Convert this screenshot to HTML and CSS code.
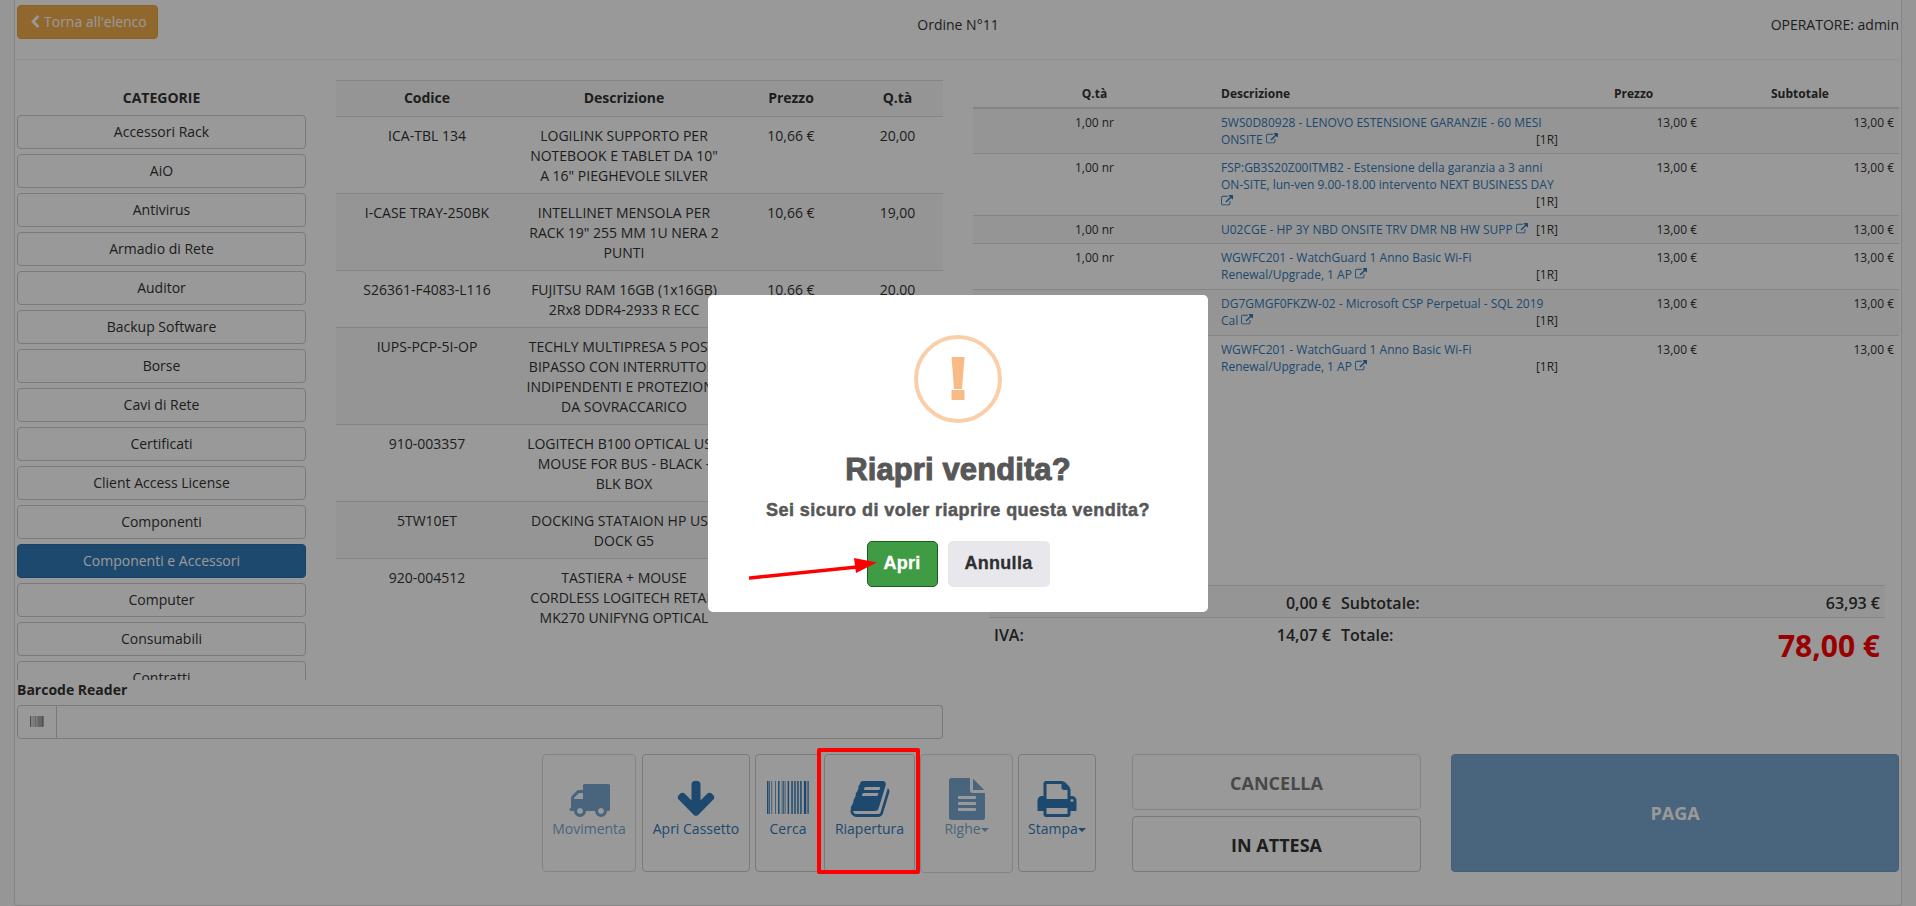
FILE: index.html
```html
<!DOCTYPE html>
<html lang="it">
<head>
  <meta charset="UTF-8" />
  <meta name="viewport" content="width=device-width, initial-scale=1.0" />
  <title>Ordine N°11</title>
  <link rel="stylesheet" href="styles.css">
</head>
<body>
  <svg class="icon-defs" xmlns="http://www.w3.org/2000/svg">
    <symbol id="i-chevron" viewBox="0 0 1792 1792"><path d="M1427 301l-531 531 531 531q19 19 19 45t-19 45l-166 166q-19 19-45 19t-45-19l-742-742q-19-19-19-45t19-45l742-742q19-19 45-19t45 19l166 166q19 19 19 45t-19 45z"/></symbol>
    <symbol id="i-link" viewBox="0 0 1792 1792"><path d="M1408 928v320q0 119-84.5 203.5t-203.5 84.5h-832q-119 0-203.5-84.5t-84.5-203.5v-832q0-119 84.5-203.5t203.5-84.5h704q14 0 23 9t9 23v64q0 14-9 23t-23 9h-704q-66 0-113 47t-47 113v832q0 66 47 113t113 47h832q66 0 113-47t47-113v-320q0-14 9-23t23-9h64q14 0 23 9t9 23zm384-864v512q0 26-19 45t-45 19-45-19l-176-176-652 652q-10 10-23 10t-23-10l-114-114q-10-10-10-23t10-23l652-652-176-176q-19-19-19-45t19-45 45-19h512q26 0 45 19t19 45z"/></symbol>
    <symbol id="i-barcode" viewBox="0 0 1792 1792"><path d="M63 1536h-63v-1408h63v1408zm63-1h-32v-1407h32v1407zm94 0h-31v-1407h31v1407zm157 0h-31v-1407h31v1407zm157 0h-62v-1407h62v1407zm126 0h-31v-1407h31v1407zm63 0h-31v-1407h31v1407zm63 0h-31v-1407h31v1407zm157 0h-63v-1407h63v1407zm157 0h-63v-1407h63v1407zm126 0h-63v-1407h63v1407zm126 0h-63v-1407h63v1407zm126 0h-63v-1407h63v1407zm189 0h-94v-1407h94v1407zm63 0h-32v-1407h32v1407zm94 1h-63v-1408h63v1408z"/></symbol>
    <symbol id="i-truck" viewBox="0 0 1792 1792"><path d="M640 1408q0-52-38-90t-90-38-90 38-38 90 38 90 90 38 90-38 38-90zm-384-512h384v-256h-158q-13 0-22 9l-195 195q-9 9-9 22v30zm1280 512q0-52-38-90t-90-38-90 38-38 90 38 90 90 38 90-38 38-90zm256-1088v1024q0 15-4 26.5t-13.5 18.5-16.5 11.5-23.5 6-22.5 2-25.5 0-22.5-.5q0 106-75 181t-181 75-181-75-75-181h-384q0 106-75 181t-181 75-181-75-75-181h-64q-3 0-22.5.5t-25.5 0-22.5-2-23.5-6-16.5-11.5-13.5-18.5-4-26.5q0-26 19-45t45-19v-320q0-8-.5-35t0-38 2.5-34.5 6.5-37 14-30.5 22.5-30l198-198q19-19 50.5-32t58.5-13h160v-192q0-26 19-45t45-19h1024q26 0 45 19t19 45z"/></symbol>
    <symbol id="i-arrow" viewBox="0 0 1792 1792"><path d="M1675 832q0 53-37 90l-651 652q-39 37-91 37-53 0-90-37l-651-652q-38-36-38-90 0-53 38-91l74-75q39-37 91-37 53 0 90 37l294 294v-704q0-52 38-90t90-38h128q52 0 90 38t38 90v704l294-294q37-37 90-37 52 0 91 37l75 75q37 39 37 91z"/></symbol>
    <symbol id="i-book" viewBox="0 0 1792 1792"><path d="M1703 478q40 57 18 129l-275 906q-19 64-76.500 107.500t-122.500 43.500h-923q-77 0-148.500-53.500t-99.500-131.500q-24-67-2-127 0-4 3-27t4-37q1-8-3-21.500t-3-19.500q2-11 8-21t16.500-23.500 16.500-23.500q23-38 45-91.500t30-91.500q3-10 .5-30t-.5-28q3-11 17-28t17-23q21-36 42-92t25-90q1-9-2.500-32t.5-28q4-13 22-30.500t22-22.500q19-26 42.500-84.500t27.500-96.500q1-8-3-25.500t-2-26.500q2-8 9-18t18-23 17-21q8-12 16.500-30.500t15-35 16-36 19.500-32 26.500-23.500 36-11.500 47.500 5.500l-1 3q38-9 51-9h761q74 0 114 56t18 130l-274 906q-36 119-71.500 153.500t-128.500 34.500h-869q-27 0-38 15-11 16-1 43 24 70 144 70h923q29 0 56-15.500t35-41.500l300-987q7-22 5-57 38 15 59 43zm-1064 2q-4 13 2 22.500t20 9.500h608q13 0 25.500-9.500t16.500-22.500l21-64q4-13-2-22.500t-20-9.500h-608q-13 0-25.500 9.500t-16.500 22.500zm-83 256q-4 13 2 22.500t20 9.500h608q13 0 25.500-9.500t16.500-22.500l21-64q4-13-2-22.500t-20-9.500h-608q-13 0-25.500 9.500t-16.500 22.500z"/></symbol>
    <symbol id="i-file" viewBox="0 0 1792 1792"><path d="M1596 476q14 14 28 36h-472v-472q22 14 36 28zm-476 164h544v1056q0 40-28 68t-68 28h-1344q-40 0-68-28t-28-68v-1600q0-40 28-68t68-28h800v544q0 40 28 68t68 28zm160 736v-64q0-14-9-23t-23-9h-704q-14 0-23 9t-9 23v64q0 14 9 23t23 9h704q14 0 23-9t9-23zm0-256v-64q0-14-9-23t-23-9h-704q-14 0-23 9t-9 23v64q0 14 9 23t23 9h704q14 0 23-9t9-23zm0-256v-64q0-14-9-23t-23-9h-704q-14 0-23 9t-9 23v64q0 14 9 23t23 9h704q14 0 23-9t9-23z"/></symbol>
    <symbol id="i-print" viewBox="0 0 1792 1792"><path d="M448 1536h896v-256h-896v256zm0-640h896v-384h-160q-40 0-68-28t-28-68v-160h-640v640zm1152 64q0-26-19-45t-45-19-45 19-19 45 19 45 45 19 45-19 19-45zm128 0v416q0 13-9.500 22.500t-22.500 9.500h-224v160q0 40-28 68t-68 28h-960q-40 0-68-28t-28-68v-160h-224q-13 0-22.500-9.500t-9.500-22.500v-416q0-79 56.500-135.500t135.500-56.500h64v-544q0-40 28-68t68-28h672q40 0 88 20t76 48l152 152q28 28 48 76t20 88v256h64q79 0 135.500 56.500t56.500 135.500z"/></symbol>
  </svg>

  <div class="panel">
    <header class="top-bar">
      <div class="top-left">
        <a class="btn btn-warning"><svg class="icon-chevron"><use href="#i-chevron"/></svg>Torna all'elenco</a>
      </div>
      <div class="top-center">Ordine N°11</div>
      <div class="top-right">OPERATORE: admin</div>
    </header>

    <div class="main">
      <section class="col-left">
        <div class="browse">
          <div class="categories">
            <h4 class="categories-title">CATEGORIE</h4>
            <div class="category-list">
              <a class="btn btn-category">Accessori Rack</a>
              <a class="btn btn-category">AiO</a>
              <a class="btn btn-category">Antivirus</a>
              <a class="btn btn-category">Armadio di Rete</a>
              <a class="btn btn-category">Auditor</a>
              <a class="btn btn-category">Backup Software</a>
              <a class="btn btn-category">Borse</a>
              <a class="btn btn-category">Cavi di Rete</a>
              <a class="btn btn-category">Certificati</a>
              <a class="btn btn-category">Client Access License</a>
              <a class="btn btn-category">Componenti</a>
              <a class="btn btn-category active">Componenti e Accessori</a>
              <a class="btn btn-category">Computer</a>
              <a class="btn btn-category">Consumabili</a>
              <a class="btn btn-category">Contratti</a>
            </div>
          </div>
          <div class="products">
            <table class="product-table">
              <colgroup>
                <col class="c-code"><col class="c-desc"><col class="c-price"><col class="c-qty">
              </colgroup>
              <thead>
                <tr><th>Codice</th><th>Descrizione</th><th>Prezzo</th><th>Q.tà</th></tr>
              </thead>
              <tbody>
                <tr><td>ICA-TBL 134</td><td>LOGILINK SUPPORTO PER NOTEBOOK E TABLET DA 10" A 16" PIEGHEVOLE SILVER</td><td>10,66 €</td><td>20,00</td></tr>
                <tr><td>I-CASE TRAY-250BK</td><td>INTELLINET MENSOLA PER RACK 19" 255 MM 1U NERA 2 PUNTI</td><td>10,66 €</td><td>19,00</td></tr>
                <tr><td>S26361-F4083-L116</td><td>FUJITSU RAM 16GB (1x16GB) 2Rx8 DDR4-2933 R ECC</td><td>10,66 €</td><td>20,00</td></tr>
                <tr><td>IUPS-PCP-5I-OP</td><td>TECHLY MULTIPRESA 5 POSTI BIPASSO CON INTERRUTTORI INDIPENDENTI E PROTEZIONE DA SOVRACCARICO</td><td>10,66 €</td><td>20,00</td></tr>
                <tr><td>910-003357</td><td>LOGITECH B100 OPTICAL USB MOUSE FOR BUS - BLACK - BLK BOX</td><td>10,66 €</td><td>20,00</td></tr>
                <tr><td>5TW10ET</td><td>DOCKING STATAION HP USB DOCK G5</td><td>10,66 €</td><td>20,00</td></tr>
                <tr><td>920-004512</td><td>TASTIERA + MOUSE CORDLESS LOGITECH RETAIL MK270 UNIFYNG OPTICAL</td><td>10,66 €</td><td>20,00</td></tr>
              </tbody>
            </table>
          </div>
        </div>
        <label class="barcode-label" for="barcode">Barcode Reader</label>
        <div class="input-group">
          <span class="input-addon"><svg class="icon-barcode"><use href="#i-barcode"/></svg></span>
          <input class="input-field" type="text" id="barcode">
        </div>
      </section>

      <section class="col-right">
        <div class="cart">
          <table class="cart-table">
            <colgroup>
              <col class="c-cart-qty"><col class="c-cart-desc"><col class="c-cart-price"><col>
            </colgroup>
            <thead>
              <tr><th class="center">Q.tà</th><th>Descrizione</th><th class="price-head">Prezzo</th><th>Subtotale</th></tr>
            </thead>
            <tbody>
              <tr><td class="center">1,00 nr</td><td><a class="item-link">5WS0D80928 - LENOVO ESTENSIONE GARANZIE - 60 MESI ONSITE <svg class="icon-link"><use href="#i-link"/></svg></a><span class="rate">[1R]</span></td><td class="price">13,00 €</td><td class="subtotal">13,00 €</td></tr>
              <tr><td class="center">1,00 nr</td><td><a class="item-link">FSP:GB3S20Z00ITMB2 - Estensione della garanzia a 3 anni ON-SITE, lun-ven 9.00-18.00 intervento NEXT BUSINESS DAY <svg class="icon-link"><use href="#i-link"/></svg></a><span class="rate">[1R]</span></td><td class="price">13,00 €</td><td class="subtotal">13,00 €</td></tr>
              <tr><td class="center">1,00 nr</td><td><a class="item-link">U02CGE - HP 3Y NBD ONSITE TRV DMR NB HW SUPP <svg class="icon-link"><use href="#i-link"/></svg></a><span class="rate">[1R]</span></td><td class="price">13,00 €</td><td class="subtotal">13,00 €</td></tr>
              <tr class="row-tall"><td class="center">1,00 nr</td><td><a class="item-link">WGWFC201 - WatchGuard 1 Anno Basic Wi-Fi Renewal/Upgrade, 1 AP <svg class="icon-link"><use href="#i-link"/></svg></a><span class="rate">[1R]</span></td><td class="price">13,00 €</td><td class="subtotal">13,00 €</td></tr>
              <tr class="row-tall"><td class="center">1,00 nr</td><td><a class="item-link">DG7GMGF0FKZW-02 - Microsoft CSP Perpetual - SQL 2019 Cal <svg class="icon-link"><use href="#i-link"/></svg></a><span class="rate">[1R]</span></td><td class="price">13,00 €</td><td class="subtotal">13,00 €</td></tr>
              <tr><td class="center">1,00 nr</td><td><a class="item-link">WGWFC201 - WatchGuard 1 Anno Basic Wi-Fi Renewal/Upgrade, 1 AP <svg class="icon-link"><use href="#i-link"/></svg></a><span class="rate">[1R]</span></td><td class="price">13,00 €</td><td class="subtotal">13,00 €</td></tr>
            </tbody>
          </table>
        </div>
        <div class="totals">
          <div class="totals-row striped">
            <span></span><span class="num">0,00 €</span><span>Subtotale:</span><span class="num">63,93 €</span>
          </div>
          <div class="totals-row">
            <span>IVA:</span><span class="num">14,07 €</span><span>Totale:</span><span class="num grand-total">78,00 €</span>
          </div>
        </div>
      </section>
    </div>

    <footer class="toolbar">
      <a class="tool tool-move disabled"><svg class="tool-icon"><use href="#i-truck"/></svg><span>Movimenta</span></a>
      <a class="tool tool-drawer"><svg class="tool-icon"><use href="#i-arrow"/></svg><span>Apri Cassetto</span></a>
      <a class="tool tool-search"><svg class="tool-icon"><use href="#i-barcode"/></svg><span>Cerca</span></a>
      <a class="tool tool-reopen"><svg class="tool-icon"><use href="#i-book"/></svg><span>Riapertura</span></a>
      <a class="tool tool-rows disabled"><svg class="tool-icon"><use href="#i-file"/></svg><span>Righe<i class="caret"></i></span></a>
      <a class="tool tool-print"><svg class="tool-icon"><use href="#i-print"/></svg><span>Stampa<i class="caret"></i></span></a>
      <div class="actions">
        <a class="btn btn-action disabled">CANCELLA</a>
        <a class="btn btn-action">IN ATTESA</a>
      </div>
      <a class="btn btn-pay">PAGA</a>
    </footer>
  </div>

  <div class="overlay">
    <div class="modal">
      <svg class="alert-icon" viewBox="0 0 88 88">
        <circle cx="44" cy="44" r="42" fill="none" stroke="#facea8" stroke-width="4"/>
        <path d="M37.500 22h13l-2.500 32h-8zM37.500 55h13v10h-13z" fill="#f8bb86"/>
      </svg>
      <h2 class="modal-title">Riapri vendita?</h2>
      <p class="modal-text">Sei sicuro di voler riaprire questa vendita?</p>
      <div class="modal-buttons">
        <button class="modal-btn modal-confirm">Apri</button>
        <button class="modal-btn modal-cancel">Annulla</button>
      </div>
    </div>
    <div class="mark-box"></div>
    <svg class="mark-arrow" viewBox="0 0 130 24">
      <path d="M1 21L108 10" stroke="#ff0000" stroke-width="3.500" stroke-linecap="round" fill="none"/>
      <path d="M105 1L128 5.500L107 16z" fill="#ff0000"/>
    </svg>
  </div>
</body>
</html>
```

FILE: styles.css
```css
* {
  box-sizing: border-box;
}
html, body {
  height: 100%;
}
body {
  margin: 0;
  padding-left: 14px;
  overflow: hidden;
  background-color: #fafafa;
  color: #333;
  font-family: "Open Sans", sans-serif;
  font-size: 14px;
  line-height: 20px;
}
.icon-defs {
  display: none;
}
.panel {
  width: 1888px;
  height: 906px;
  padding: 5px 2px 0;
  background-color: #fff;
  border: 1px solid #ddd;
  border-top: none;
  border-radius: 0 0 4px 4px;
}

/* top bar */
.top-bar {
  display: grid;
  grid-template-columns: 1fr 1fr 1fr;
  height: 55px;
  border-bottom: 1px solid #eee;
}
.top-center {
  margin-top: 10px;
  text-align: center;
}
.top-right {
  margin-top: 10px;
  text-align: right;
}

/* buttons */
.btn {
  display: inline-block;
  padding: 6px 12px;
  border: 1px solid #ccc;
  border-radius: 4px;
  background-color: #fff;
  color: #333;
  text-align: center;
  white-space: nowrap;
}
.btn-warning {
  padding-right: 10px;
  background-color: #f0ad4e;
  border-color: #eea236;
  color: #fff;
}
.icon-chevron {
  width: 14px;
  height: 14px;
  margin-left: -2px;
  margin-right: 2px;
  fill: #fff;
  vertical-align: -2px;
}

/* main area */
.main {
  display: flex;
  gap: 30px;
}
.col-left, .col-right {
  width: 926px;
}
.browse {
  display: flex;
  gap: 30px;
  height: 620px;
}
.categories {
  width: 289px;
  height: 620px;
  padding-top: 28px;
  overflow: hidden;
}
.categories-title {
  margin: 0 0 7px;
  font-size: 14px;
  font-weight: 700;
  text-align: center;
}
.btn-category {
  display: block;
  margin-bottom: 5px;
}
.btn-category.active {
  background-color: #337ab7;
  border-color: #2e6da4;
  color: #fff;
}
.products {
  width: 607px;
  padding-top: 20px;
  overflow: hidden;
}
.product-table {
  width: 100%;
  border-collapse: collapse;
  table-layout: fixed;
  text-align: center;
}
.c-code { width: 182px; }
.c-desc { width: 212px; }
.c-price { width: 122px; }
.c-qty { width: 91px; }
.product-table th {
  padding: 7px 8px 8px;
  background-color: #f9f9f9;
  border-top: 1px solid #ddd;
  border-bottom: 1px solid #ddd;
}
.product-table td {
  padding: 9px 8px 7px;
  border-bottom: 1px solid #ddd;
  vertical-align: top;
}
.product-table tbody tr:last-child td {
  border-bottom: none;
}
.product-table tbody tr:nth-child(even) {
  background-color: #f9f9f9;
}

/* barcode */
.barcode-label {
  display: block;
  margin-bottom: 5px;
  font-weight: 700;
}
.input-group {
  display: flex;
  height: 34px;
}
.input-addon {
  display: flex;
  align-items: center;
  justify-content: center;
  width: 40px;
  border: 1px solid #ccc;
  border-radius: 4px 0 0 4px;
}
.icon-barcode {
  width: 14px;
  height: 14px;
  fill: #555;
}
.input-field {
  flex: 1;
  border: 1px solid #ccc;
  border-left: none;
  border-radius: 0 4px 4px 0;
  background: #fff;
}

/* cart */
.col-right {
  display: flex;
  flex-direction: column;
}
.cart {
  height: 525px;
  padding-top: 20px;
}
.cart-table {
  width: 100%;
  border-collapse: collapse;
  table-layout: fixed;
  font-size: 12px;
  line-height: 17px;
}
.c-cart-qty { width: 243px; }
.c-cart-desc { width: 347px; }
.c-cart-price { width: 203px; }
.cart-table th {
  padding: 5px;
  border-bottom: 2px solid #ddd;
  font-weight: 700;
  text-align: left;
}
.cart-table td {
  padding: 5px;
  border-bottom: 1px solid #ddd;
  vertical-align: top;
}
.cart-table tbody tr:last-child td {
  border-bottom: none;
}
.cart-table tbody tr:nth-child(odd) {
  background-color: #f9f9f9;
}
.cart-table .row-tall td {
  padding-bottom: 6px;
}
.cart-table .center {
  text-align: center;
}
.cart-table .price-head {
  padding-left: 51px;
}
.cart-table .price {
  padding-right: 69px;
  text-align: right;
}
.cart-table .subtotal {
  text-align: right;
}
.item-link {
  color: #337ab7;
}
.icon-link {
  width: 12px;
  height: 12px;
  fill: #337ab7;
  vertical-align: -1px;
}
.rate {
  float: right;
}

/* totals */
.totals {
  width: 896px;
  margin-left: 16px;
  font-size: 16px;
  font-weight: 600;
}
.totals-row {
  display: grid;
  grid-template-columns: 170px 167px 1fr auto;
  padding: 7px 5px;
  border-top: 1px solid #ddd;
}
.totals-row span:nth-child(3) {
  padding-left: 10px;
}
.totals-row.striped {
  height: 32px;
  background-color: #f9f9f9;
}
.num {
  text-align: right;
}
.grand-total {
  margin-top: 4px;
  color: #ff0000;
  font-size: 30px;
  font-weight: 700;
  line-height: 33px;
}

/* bottom toolbar */
.toolbar {
  display: flex;
  justify-content: flex-end;
  height: 119px;
  margin-top: 15px;
}
.tool {
  display: flex;
  flex-direction: column;
  align-items: center;
  height: 118px;
  padding-top: 23px;
  border: 1px solid #ccc;
  border-radius: 4px;
  background-color: #fff;
  color: #337ab7;
  white-space: nowrap;
}
.tool.disabled {
  opacity: .65;
}
.tool-icon {
  width: 42px;
  height: 42px;
  margin-bottom: -1px;
  fill: #337ab7;
}
.tool-move { width: 94px; margin-right: 6px; }
.tool-drawer { width: 108px; margin-right: 5px; }
.tool-search { width: 66px; margin-right: 3px; }
.tool-reopen { width: 91px; margin-right: 5px; }
.tool-rows { width: 93px; height: 119px; margin-right: 5px; }
.tool-print { width: 78px; margin-right: 36px; }
.caret {
  display: inline-block;
  border-top: 4px solid;
  border-left: 4px solid transparent;
  border-right: 4px solid transparent;
  vertical-align: middle;
}
.actions {
  display: flex;
  flex-direction: column;
  gap: 6px;
  width: 289px;
  margin-right: 30px;
}
.btn-action {
  height: 56px;
  padding-top: 16px;
  font-size: 18px;
  font-weight: 700;
  line-height: 24px;
}
.btn-action.disabled {
  opacity: .65;
}
.btn-pay {
  width: 448px;
  height: 118px;
  padding-top: 46px;
  background-color: #337ab7;
  border-color: #2e6da4;
  color: #fff;
  font-size: 18px;
  font-weight: 700;
  line-height: 24px;
  opacity: .65;
}

/* dimmed layer and dialog */
.overlay {
  position: fixed;
  inset: 0;
  display: flex;
  align-items: center;
  justify-content: center;
  background-color: rgba(0, 0, 0, .4);
}
.modal {
  display: flex;
  flex-direction: column;
  align-items: center;
  width: 500px;
  height: 317px;
  padding-top: 40px;
  background-color: #fff;
  border-radius: 5px;
  font-family: "Liberation Sans", Arial, sans-serif;
}
.alert-icon {
  width: 88px;
  height: 88px;
}
.modal-title {
  margin: 29px 0 11px;
  color: #575757;
  font-size: 31px;
  font-weight: 700;
  letter-spacing: .1px;
  line-height: 36px;
  -webkit-text-stroke: 1px #575757;
}
.modal-text {
  margin: 0 0 20px;
  color: #575757;
  font-size: 18px;
  font-weight: 700;
  letter-spacing: .45px;
  line-height: 22px;
  -webkit-text-stroke: .5px #575757;
}
.modal-buttons {
  display: flex;
  gap: 10px;
}
.modal-btn {
  height: 46px;
  border-radius: 5px;
  font-family: inherit;
  font-size: 18px;
  font-weight: 700;
  letter-spacing: .3px;
  -webkit-text-stroke: .3px;
}
.modal-confirm {
  width: 71px;
  background-color: #3f9c44;
  border: 1px solid #1e5c22;
  color: #fff;
}
.modal-cancel {
  width: 102px;
  background-color: #e8e8ec;
  border: none;
  color: #2f2f2f;
}

/* annotations drawn on the screenshot */
.mark-box {
  position: absolute;
  left: 817px;
  top: 748px;
  width: 103px;
  height: 126px;
  border: 4px solid #ff0000;
  border-radius: 2px;
}
.mark-arrow {
  position: absolute;
  left: 749px;
  top: 557px;
  width: 130px;
  height: 24px;
}
```
